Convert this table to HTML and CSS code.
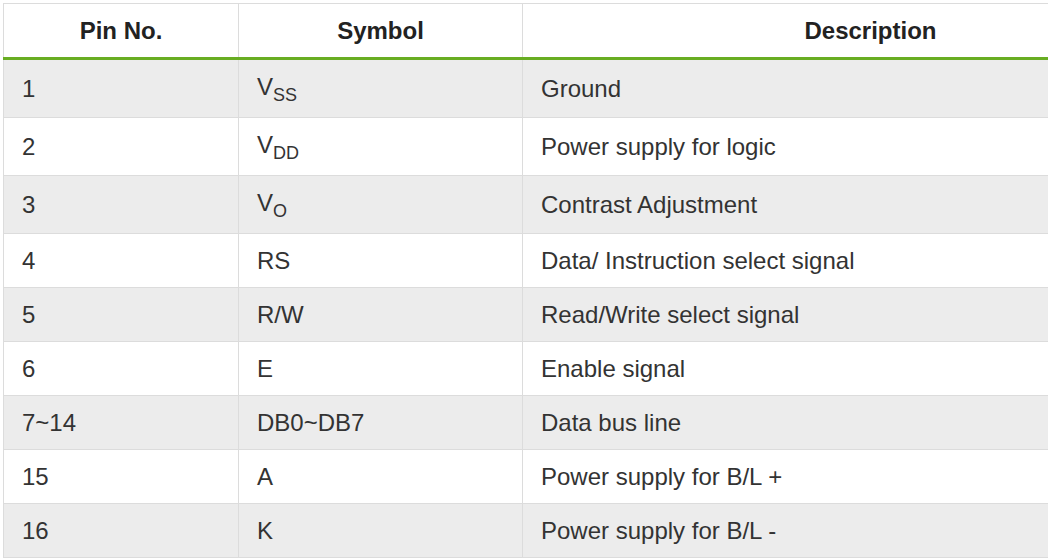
FILE: index.html
```html
<!DOCTYPE html>
<html>
<head>
<meta charset="utf-8">
<link rel="stylesheet" href="styles.css">
</head>
<body>
<div class="frame">
<table class="pins">
  <colgroup>
    <col class="c-pin">
    <col class="c-sym">
    <col class="c-desc">
  </colgroup>
  <thead>
    <tr><th>Pin No.</th><th>Symbol</th><th>Description</th></tr>
  </thead>
  <tbody>
    <tr><td>1</td><td>V<sub>SS</sub></td><td>Ground</td></tr>
    <tr><td>2</td><td>V<sub>DD</sub></td><td>Power supply for logic</td></tr>
    <tr><td>3</td><td>V<sub>O</sub></td><td>Contrast Adjustment</td></tr>
    <tr><td>4</td><td>RS</td><td>Data/ Instruction select signal</td></tr>
    <tr><td>5</td><td>R/W</td><td>Read/Write select signal</td></tr>
    <tr><td>6</td><td>E</td><td>Enable signal</td></tr>
    <tr><td>7~14</td><td>DB0~DB7</td><td>Data bus line</td></tr>
    <tr><td>15</td><td>A</td><td>Power supply for B/L +</td></tr>
    <tr><td>16</td><td>K</td><td>Power supply for B/L -</td></tr>
  </tbody>
</table>
</div>
</body>
</html>
```
FILE: styles.css
```css
html, body {
  margin: 0;
  padding: 0;
  background: #fff;
}
body {
  font-family: "Liberation Sans", Arial, sans-serif;
  color: #333;
}
.frame {
  width: 1048px;
  height: 559px;
  overflow: hidden;
}
.pins {
  border-collapse: collapse;
  table-layout: fixed;
  width: 1215px;
  margin: 3px 0 0 3px;
  font-size: 24px;
  line-height: 35px;
}
.c-pin { width: 235px; }
.c-sym { width: 284px; }
.c-desc { width: 696px; }
.pins th, .pins td {
  border: 1px solid #dcdcdc;
  padding: 9px 18px;
  text-align: left;
  vertical-align: middle;
}
.pins th {
  font-weight: bold;
  text-align: center;
  color: #222;
  padding: 9px 18px 9px;
  border-bottom: 3px solid #68ad22;
  background: #fff;
}
.pins tbody tr:nth-child(odd) td {
  background: #ececec;
}
.pins tbody tr:nth-child(even) td {
  background: #fff;
}
.pins sub {
  font-size: 18px;
  vertical-align: -6px;
  line-height: 25px;
}
```
